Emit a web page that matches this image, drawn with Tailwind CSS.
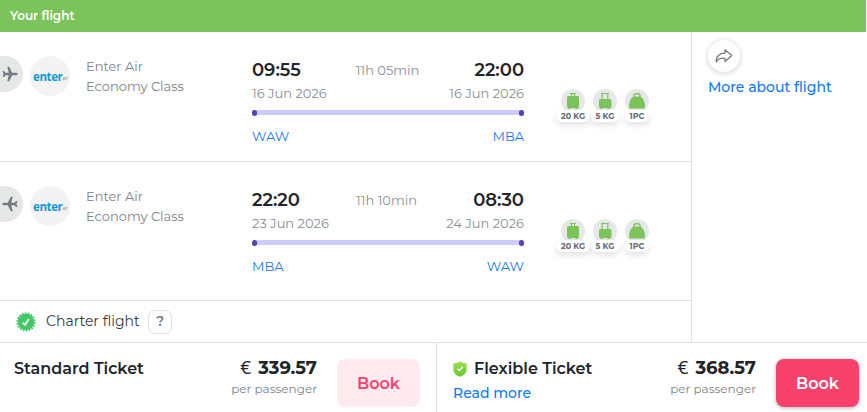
<!DOCTYPE html>
<html lang="en">
<head>
    <meta charset="UTF-8">
    <meta name="viewport" content="width=device-width, initial-scale=1.0">
    <title>Your flight</title>
    <script src="https://cdn.jsdelivr.net/npm/@tailwindcss/browser@4"></script>
</head>
<body class="w-[867px] h-[412px] overflow-hidden bg-white text-[#212529] font-['Montserrat','Inter',sans-serif]">

    <!-- Shared icons -->
    <svg class="hidden">
        <symbol id="plane" viewBox="0 0 16 16">
            <path d="M15.800 8c0-.8-1.200-1.300-2.300-1.300H10.200L7.200.8H5.300l1.400 5.900H3.500L2 5H.6l.9 3-.9 3H2l1.500-1.700h3.200L5.300 15.200h1.900l3-5.900h3.300c1.100 0 2.300-.5 2.300-1.300z"/>
        </symbol>
        <symbol id="suitcase" viewBox="0 0 24 24">
            <path d="M9 4.500h6M10.500 4.500v4M13.500 4.500v4" stroke="currentColor" stroke-width="1.100" fill="none"/>
            <rect x="6" y="7" width="12" height="12" rx="1.500" fill="currentColor"/>
            <path d="M7.500 18h2v2h-2zM14.500 18h2v2h-2z" fill="currentColor"/>
        </symbol>
        <symbol id="cabin" viewBox="0 0 24 24">
            <path d="M8 4.500h8M9.200 4.500v6M14.800 4.500v6" stroke="currentColor" stroke-width="1.200" fill="none"/>
            <rect x="6" y="10" width="12.500" height="9" rx="1.500" fill="currentColor"/>
            <path d="M7.500 18h2v2h-2zM14.500 18h2v2h-2z" fill="currentColor"/>
        </symbol>
        <symbol id="bag" viewBox="0 0 24 24">
            <path d="M9 8.500V6.500a1.800 1.800 0 0 1 1.800-1.800h2.400A1.800 1.800 0 0 1 15 6.500v2" stroke="currentColor" stroke-width="1.400" fill="none"/>
            <path d="M8.500 7.500h7c3 1.500 4.500 6 4.500 10.500 0 1-.7 1.500-1.600 1.500H5.600C4.700 19.500 4 19 4 18c0-4.500 1.500-9 4.500-10.500z" fill="currentColor"/>
        </symbol>
    </svg>

    <header class="w-[866px] h-8 bg-[#7cc35b] pl-[10px] text-white text-[12px] leading-[31px] font-semibold">Your flight</header>

    <main class="flex h-[310px]">
        <section class="w-[692px] border-r border-[#dee2e6]">

            <!-- Outbound -->
            <div class="flex items-start h-[130px] pt-6 border-b border-[#dee2e6]">
                <div class="flex items-center w-[23px] h-9 bg-[#e6e8e7] rounded-r-[18px] pl-[2px]">
                    <svg class="w-4 h-4 fill-[#777b86]"><use href="#plane"/></svg>
                </div>
                <div class="flex items-center justify-center ml-[7px] size-10 pt-px pl-px rounded-full bg-[#f3f3f3] whitespace-nowrap">
                    <span class="text-[11.500px] leading-none font-bold text-[#0c9bd3] font-['Open_Sans',sans-serif] tracking-[-0.4px]">enter</span><span class="text-[4.500px] pt-1 text-[#888] font-['Open_Sans',sans-serif]">air</span>
                </div>
                <div class="ml-4 w-[166px] text-[13px] leading-5 text-[#7d828b]">
                    <p>Enter Air</p>
                    <p>Economy Class</p>
                </div>
                <div class="w-[272px]">
                    <div class="flex justify-between h-[27px] leading-[29px]">
                        <b class="text-[18px] font-semibold">09:55</b>
                        <span class="text-[13px] text-[#8b8f96]">11h 05min</span>
                        <b class="text-[18px] font-semibold">22:00</b>
                    </div>
                    <div class="flex justify-between text-[13px] leading-5 text-[#8b8f96]">
                        <span>16 Jun 2026</span>
                        <span>16 Jun 2026</span>
                    </div>
                    <div class="flex justify-between items-center h-[5px] mt-[7px] bg-[#ccccff] rounded-full">
                        <i class="w-[5px] h-[6px] rounded-full bg-[#573fb5]"></i>
                        <i class="w-[5px] h-[6px] rounded-full bg-[#573fb5]"></i>
                    </div>
                    <div class="flex justify-between mt-[11px] text-[13px] leading-5 text-[#1a78f8]">
                        <span>WAW</span>
                        <span>MBA</span>
                    </div>
                </div>
                <div class="flex ml-[33px] pt-[33px] text-[8px] font-bold text-[#666b75]">
                    <div class="flex flex-col items-center w-8">
                        <svg class="size-6 rounded-full bg-[#e6e8e7] text-[#7cc35b]"><use href="#suitcase"/></svg>
                        <span class="-mt-[3px] h-3 px-[5px] rounded-full bg-white leading-3 whitespace-nowrap shadow-[0_3px_6px_rgba(0,0,0,0.12)] relative">20 KG</span>
                    </div>
                    <div class="flex flex-col items-center w-8">
                        <svg class="size-6 rounded-full bg-[#e6e8e7] text-[#7cc35b]"><use href="#cabin"/></svg>
                        <span class="-mt-[3px] h-3 px-[5px] rounded-full bg-white leading-3 whitespace-nowrap shadow-[0_3px_6px_rgba(0,0,0,0.12)] relative">5 KG</span>
                    </div>
                    <div class="flex flex-col items-center w-8">
                        <svg class="size-6 rounded-full bg-[#e6e8e7] text-[#7cc35b]"><use href="#bag"/></svg>
                        <span class="-mt-[3px] h-3 px-[5px] rounded-full bg-white leading-3 whitespace-nowrap shadow-[0_3px_6px_rgba(0,0,0,0.12)] relative">1PC</span>
                    </div>
                </div>
            </div>

            <!-- Return -->
            <div class="flex items-start h-[139px] pt-6 border-b border-[#dee2e6]">
                <div class="flex items-center w-[23px] h-9 bg-[#e6e8e7] rounded-r-[18px] pl-[2px]">
                    <svg class="w-4 h-4 fill-[#777b86] -scale-x-100"><use href="#plane"/></svg>
                </div>
                <div class="flex items-center justify-center ml-[7px] size-10 pt-px pl-px rounded-full bg-[#f3f3f3] whitespace-nowrap">
                    <span class="text-[11.500px] leading-none font-bold text-[#0c9bd3] font-['Open_Sans',sans-serif] tracking-[-0.4px]">enter</span><span class="text-[4.500px] pt-1 text-[#888] font-['Open_Sans',sans-serif]">air</span>
                </div>
                <div class="ml-4 w-[166px] text-[13px] leading-5 text-[#7d828b]">
                    <p>Enter Air</p>
                    <p>Economy Class</p>
                </div>
                <div class="w-[272px]">
                    <div class="flex justify-between h-[27px] leading-[29px]">
                        <b class="text-[18px] font-semibold">22:20</b>
                        <span class="text-[13px] text-[#8b8f96]">11h 10min</span>
                        <b class="text-[18px] font-semibold">08:30</b>
                    </div>
                    <div class="flex justify-between text-[13px] leading-5 text-[#8b8f96]">
                        <span>23 Jun 2026</span>
                        <span>24 Jun 2026</span>
                    </div>
                    <div class="flex justify-between items-center h-[5px] mt-[7px] bg-[#ccccff] rounded-full">
                        <i class="w-[5px] h-[6px] rounded-full bg-[#573fb5]"></i>
                        <i class="w-[5px] h-[6px] rounded-full bg-[#573fb5]"></i>
                    </div>
                    <div class="flex justify-between mt-[11px] text-[13px] leading-5 text-[#1a78f8]">
                        <span>MBA</span>
                        <span>WAW</span>
                    </div>
                </div>
                <div class="flex ml-[33px] pt-[33px] text-[8px] font-bold text-[#666b75]">
                    <div class="flex flex-col items-center w-8">
                        <svg class="size-6 rounded-full bg-[#e6e8e7] text-[#7cc35b]"><use href="#suitcase"/></svg>
                        <span class="-mt-[3px] h-3 px-[5px] rounded-full bg-white leading-3 whitespace-nowrap shadow-[0_3px_6px_rgba(0,0,0,0.12)] relative">20 KG</span>
                    </div>
                    <div class="flex flex-col items-center w-8">
                        <svg class="size-6 rounded-full bg-[#e6e8e7] text-[#7cc35b]"><use href="#cabin"/></svg>
                        <span class="-mt-[3px] h-3 px-[5px] rounded-full bg-white leading-3 whitespace-nowrap shadow-[0_3px_6px_rgba(0,0,0,0.12)] relative">5 KG</span>
                    </div>
                    <div class="flex flex-col items-center w-8">
                        <svg class="size-6 rounded-full bg-[#e6e8e7] text-[#7cc35b]"><use href="#bag"/></svg>
                        <span class="-mt-[3px] h-3 px-[5px] rounded-full bg-white leading-3 whitespace-nowrap shadow-[0_3px_6px_rgba(0,0,0,0.12)] relative">1PC</span>
                    </div>
                </div>
            </div>

            <!-- Charter info -->
            <div class="flex items-center h-[41px] pl-4">
                <svg class="size-5" viewBox="0 0 20 20">
                    <circle cx="10" cy="10" r="8.200" fill="#44c767"/>
                    <circle cx="10" cy="10" r="8.700" fill="none" stroke="#44c767" stroke-width="1.800" stroke-dasharray="1.700 1.337"/>
                    <path d="M6.800 10.600l2.200 2.200 3.900-5.800" fill="none" stroke="#fff" stroke-width="1.800"/>
                </svg>
                <span class="ml-[10px] w-[94px] text-[14px] text-[#34393e] whitespace-nowrap">Charter flight</span>
                <span class="ml-2 flex items-center justify-center size-6 rounded-[7px] border border-[#dee2e6] text-[14px] font-semibold text-[#777b86]">?</span>
            </div>
        </section>

        <aside class="flex-1 pl-4 pt-2">
            <div class="flex items-center justify-center size-8 rounded-full shadow-[0_1px_6px_rgba(0,0,0,0.2)]">
                <svg class="w-[18px] h-4" viewBox="0 0 18 16" fill="none" stroke="#777b86" stroke-width="1.300" stroke-linejoin="round">
                    <path d="M10 1.800L16.800 7.600 10 13.600V10.300C5.500 9.800 2.800 11 1.300 14 .8 8.500 4.500 5 10 5z"/>
                </svg>
            </div>
            <a class="block mt-[5px] text-[14px] leading-5 font-medium text-[#0d78fd] whitespace-nowrap">More about flight</a>
        </aside>
    </main>

    <footer class="flex h-[70px] border-t border-[#dee2e6]">
        <div class="flex w-[437px] pl-[14px] pr-4 border-r border-[#dee2e6]">
            <h2 class="pt-4 text-[16px] leading-5 font-semibold">Standard Ticket</h2>
            <div class="ml-auto pt-[15px] text-right">
                <p class="text-[18px] leading-5 font-bold"><span class="font-medium text-[19px] leading-none mr-[2px] font-['Open_Sans',sans-serif]">€</span> 339.57</p>
                <p class="mt-[3px] text-[12px] leading-4 text-[#7d828b]">per passenger</p>
            </div>
            <button class="ml-5 mt-4 w-[83px] h-12 pt-px rounded-lg bg-[#ffebef] text-[16px] font-semibold text-[#fa416d]">Book</button>
        </div>
        <div class="flex flex-1 pl-4 pr-2">
            <div class="pt-4">
                <h2 class="flex items-center text-[16px] leading-5 font-semibold">
                    <svg class="w-[14px] h-4 mr-[7px]" viewBox="0 0 14 16">
                        <defs>
                            <linearGradient id="shield" x2="0" y2="1">
                                <stop stop-color="#9be052"/>
                                <stop offset="1" stop-color="#66c628"/>
                            </linearGradient>
                        </defs>
                        <path d="M7 .2c2 1.400 4 2 6.600 2v6c0 4-3.100 6.200-6.600 7.600C3.500 14.400.4 12.200.4 8.200v-6C3 2.200 5 1.600 7 .2z" fill="url(#shield)"/>
                        <path d="M4.300 7.700l2 1.900 3.500-3.500" fill="none" stroke="#fff" stroke-width="1.400"/>
                    </svg>
                    Flexible Ticket
                </h2>
                <a class="block mt-1 text-[14px] leading-[21px] font-medium text-[#0d78fd]">Read more</a>
            </div>
            <div class="ml-auto pt-[15px] text-right">
                <p class="text-[18px] leading-5 font-bold"><span class="font-medium text-[19px] leading-none mr-[2px] font-['Open_Sans',sans-serif]">€</span> 368.57</p>
                <p class="mt-[3px] text-[12px] leading-4 text-[#7d828b]">per passenger</p>
            </div>
            <button class="ml-5 mt-4 w-[83px] h-12 pt-px rounded-lg bg-[#f8426b] text-[16px] font-semibold text-white shadow-[0_1px_4px_rgba(0,0,0,0.3)]">Book</button>
        </div>
    </footer>
</body>
</html>
